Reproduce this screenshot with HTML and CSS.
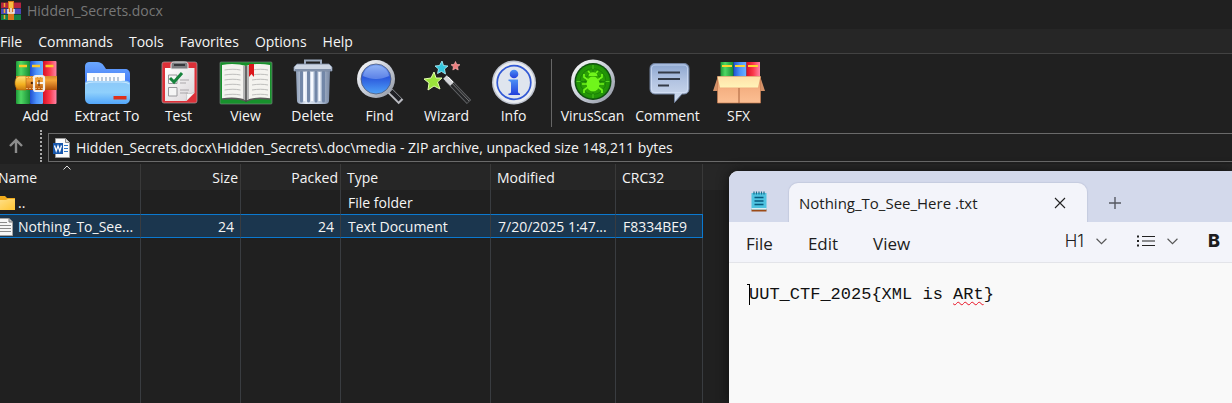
FILE: index.html
```html
<!DOCTYPE html>
<html lang="en">
<head>
<meta charset="utf-8">
<title>Hidden_Secrets.docx</title>
<link rel="stylesheet" href="styles.css">
</head>
<body>
<svg class="defs" aria-hidden="true">
  <defs>
    <linearGradient id="green"><stop offset="0" stop-color="#1f9a38"/><stop offset=".35" stop-color="#4fd863"/><stop offset="1" stop-color="#168a34"/></linearGradient>
    <linearGradient id="blue"><stop offset="0" stop-color="#1f4fd0"/><stop offset=".5" stop-color="#4c92fb"/><stop offset="1" stop-color="#6cb4ff"/></linearGradient>
    <linearGradient id="red"><stop offset="0" stop-color="#d80f26"/><stop offset=".5" stop-color="#fb3a4c"/><stop offset="1" stop-color="#ff85a8"/></linearGradient>
    <linearGradient id="belt" x2="0" y2="1"><stop offset="0" stop-color="#d98a2e"/><stop offset=".3" stop-color="#f6a63a"/><stop offset="1" stop-color="#b04f08"/></linearGradient>
    <linearGradient id="gold" x2="0" y2="1"><stop offset="0" stop-color="#ffe27a"/><stop offset=".6" stop-color="#f3b020"/><stop offset="1" stop-color="#c97a10"/></linearGradient>
    <linearGradient id="folderBack" x2="0" y2="1"><stop offset="0" stop-color="#6ba8ff"/><stop offset="1" stop-color="#2d62f2"/></linearGradient>
    <linearGradient id="folderFront" x2="0" y2="1"><stop offset="0" stop-color="#8cc8f8"/><stop offset=".5" stop-color="#8fd0fc"/><stop offset="1" stop-color="#52a6fa"/></linearGradient>
    <linearGradient id="paper" x2="1" y2="1"><stop offset="0" stop-color="#fff"/><stop offset="1" stop-color="#d9d5d8"/></linearGradient>
    <linearGradient id="steel"><stop offset="0" stop-color="#8a9bb5"/><stop offset=".3" stop-color="#e4ebf5"/><stop offset=".7" stop-color="#b8c6da"/><stop offset="1" stop-color="#7888a3"/></linearGradient>
    <linearGradient id="rim" x2="1" y2="1"><stop offset="0" stop-color="#fff"/><stop offset=".5" stop-color="#c9ced8"/><stop offset="1" stop-color="#8c929e"/></linearGradient>
    <linearGradient id="lens" x2="0" y2="1"><stop offset="0" stop-color="#7aa2f2"/><stop offset=".45" stop-color="#2b58dc"/><stop offset="1" stop-color="#4fa2f8"/></linearGradient>
    <linearGradient id="info" x2="0" y2="1"><stop offset="0" stop-color="#4b90f5"/><stop offset="1" stop-color="#2340dc"/></linearGradient>
    <linearGradient id="bubble" x2="0" y2="1"><stop offset="0" stop-color="#8ba5cf"/><stop offset=".4" stop-color="#afc1e0"/><stop offset="1" stop-color="#d3deef"/></linearGradient>
    <linearGradient id="box" x2="0" y2="1"><stop offset="0" stop-color="#d98a5c"/><stop offset=".5" stop-color="#f5b183"/><stop offset="1" stop-color="#fcbf93"/></linearGradient>
    <linearGradient id="flap" x2="0" y2="1"><stop offset="0" stop-color="#ffe0a8"/><stop offset="1" stop-color="#fff3b8"/></linearGradient>
    <radialGradient id="radar"><stop offset="0" stop-color="#3fb800"/><stop offset="1" stop-color="#1e8f08"/></radialGradient>
    <linearGradient id="yellow" x2="1" y2="1"><stop offset="0" stop-color="#ffe08a"/><stop offset="1" stop-color="#ffc533"/></linearGradient>
  </defs>
</svg>

<main class="archiver">
  <header class="titlebar">
    <svg class="app-icon" viewBox="0 0 20 19" aria-hidden="true">
      <rect y="1" width="20" height="6" fill="#b3243f"/><rect y="7" width="20" height="6" fill="#4b48b8"/><rect y="13" width="20" height="6" fill="#148044"/>
      <path d="M0 1.500h20M0 7.500h20M0 13.500h20" stroke="#171717" stroke-opacity=".5"/>
      <path d="M3.500 2v4M3.500 8v4M3.500 14v4" stroke="#f0a92e" stroke-width="1.500"/>
      <rect x="7" y="0" width="6" height="19" fill="#d8761b"/><path d="M8 1h4v6H8z" fill="#f8bd42"/>
      <path d="M7 8v4h6V8M10 7v4" stroke="#eee" stroke-width="1.500" fill="none"/>
    </svg>
    <h1>Hidden_Secrets.docx</h1>
  </header>

  <nav class="menubar" aria-label="Main menu">
    <button>File</button><button>Commands</button><button>Tools</button><button>Favorites</button><button>Options</button><button>Help</button>
  </nav>

  <div class="toolbar" role="toolbar" aria-label="Archive tools">
    <button class="tool">
      <svg viewBox="0 0 54 46" aria-hidden="true">
        <rect x="7" y="2" width="14" height="43" rx="1" fill="url(#green)"/><rect x="21" y="2" width="13" height="43" rx="1" fill="url(#blue)"/><rect x="34" y="2" width="13.500" height="43" rx="1" fill="url(#red)"/>
        <path d="M10 7h8M23 7h8M36.500 7h8" stroke="#ffc928" stroke-width="2.400"/>
        <path d="M7 17h41v14H7z" fill="url(#belt)"/>
        <path d="M11 17h6v14h-6c-3 0-5-3-5-7s2-7 5-7z" fill="url(#gold)" stroke="#b0700e" stroke-width=".6"/>
        <path d="M17 18.500h18M17 29.500h18" stroke="#ffd58a" stroke-width=".7" stroke-dasharray="2 1"/>
        <circle cx="23" cy="24" r="1.300" fill="#522300"/>
        <rect x="25" y="17" width="10" height="15" rx="2" fill="none" stroke="#f1efec" stroke-width="2.200"/>
        <path d="M28 24h6" stroke="#fff" stroke-width="1.800"/><path d="M30 21v6" stroke="#572a09"/>
      </svg>
      <span>Add</span>
    </button>
    <button class="tool tool-wide">
      <svg viewBox="0 0 54 46" aria-hidden="true">
        <path d="M5 8c0-4 2-5 5-5h7c3 0 5 1 7 4l2 3h19c3 0 5 2 5 5v20H5z" fill="url(#folderBack)"/>
        <path d="M7 14h38v16H7z" fill="#fafcff"/>
        <path d="M14 18v5M18 18v5M22 18v5M26 18v5M30 18v5M34 18v5M38 18v5" stroke="#9fb4ca" stroke-width="1.400"/>
        <path d="M5 24c2-3 5-2 8-2h28c4 0 7-1 9 2v15c0 4-2 6-6 6H11c-4 0-6-2-6-6z" fill="url(#folderFront)"/>
        <path d="M6 25c2-2 5-2 8-2h27c4 0 6 0 8 2" fill="none" stroke="#c7e7ff" stroke-width="1.200"/>
        <rect x="33.500" y="37" width="13" height="3.500" fill="#df3019"/>
      </svg>
      <span>Extract To</span>
    </button>
    <button class="tool">
      <svg viewBox="0 0 54 46" aria-hidden="true">
        <rect x="10" y="3" width="35" height="41" rx="2" fill="#dc3038" stroke="#a9a1a3" stroke-width=".7"/>
        <path d="M13 9h29.500v25l-8 8H13z" fill="url(#paper)"/><path d="M34 42c1-3 1-6 0-8 3 1 6 1 8.500-1" fill="#f8f8f8" stroke="#aaa" stroke-width=".5"/>
        <path d="M19 10V6c0-3 2-3 4-3h9c2 0 4 0 4 3v4z" fill="#7b7d80" stroke="#e9e9e9"/><path d="M22 6h11" stroke="#35383c" stroke-width="2"/>
        <path d="M16.500 16h8.500v8.500h-8.500zM16.500 28.500h8.500V37h-8.500z" fill="#f5f5f5" stroke="#99989c"/>
        <path d="M28 21h9M28 24h6M28 31h9M28 34h8" stroke="#aaa7aa"/>
        <path d="M18 19l4 4 8-9" fill="none" stroke="#16833c" stroke-width="3"/>
      </svg>
      <span>Test</span>
    </button>
    <button class="tool">
      <svg viewBox="0 0 54 46" aria-hidden="true">
        <rect x="1" y="3" width="52" height="42" rx="1" fill="#17912c" stroke="#718578" stroke-width=".7"/>
        <path d="M3 6c9-2 18-1 24 1 6-2 15-3 24-1v34c-9-1-18-1-24 2-6-3-15-3-24-2z" fill="#f4f3ef"/>
        <path d="M3 40c9-1 18-1 24 2 6-3 15-3 24-2" fill="none" stroke="#5a5a59" stroke-width="1.600"/>
        <path d="M24 6.500c2 0 3 1 3 1s1-1 3-1V40c-2 0-3 2-3 2s-1-2-3-2z" fill="#b5b5b5"/><path d="M27 7v36" stroke="#444" stroke-width="1.400"/>
        <path d="M5.500 11c6-1 11-1 16 0M5.500 16c6-1 11-1 16 0M5.500 21c6-1 11-1 16 0M5.500 26c6-1 11-1 16 0M5.500 31c6-1 11-1 16 0M5.500 36c6-1 11-1 16 0M33 11c6-1 11-1 16 0M33 16c6-1 11-1 16 0M33 21c6-1 11-1 16 0M33 26c6-1 11-1 16 0M33 31c6-1 11-1 16 0M33 36c6-1 11-1 16 0" fill="none" stroke="#bebebc"/>
        <path d="M30 5h5v13l-2.500-3-2.500 3z" fill="#dc171b"/>
      </svg>
      <span>View</span>
    </button>
    <button class="tool">
      <svg viewBox="0 0 54 46" aria-hidden="true">
        <path d="M19 6V1.500h16V6" fill="none" stroke="#9caabe" stroke-width="2"/>
        <path d="M10 12h34l-1 30c0 2-2 3-4 3H15c-2 0-4-1-4-3z" fill="url(#steel)"/>
        <path d="M15.500 13v29M22.500 13v29M30 13v29M37.500 13v29" stroke="#7287a8" stroke-width="3" stroke-linecap="round"/><path d="M18.500 13v29M26 13v29M33.500 13v29" stroke="#f7faff" stroke-width="2"/>
        <path d="M11 5h32l3 3v4H8V8z" fill="#cdd6e4" stroke="#79899f" stroke-width=".8"/><path d="M9 11h36" stroke="#8191aa" stroke-width="2"/>
      </svg>
      <span>Delete</span>
    </button>
    <button class="tool">
      <svg viewBox="0 0 54 46" aria-hidden="true">
        <path d="M37 32l11 11" stroke="#b9bac0" stroke-width="6.500"/><path d="M38 32l9 9" stroke="#202126" stroke-width="4"/><path d="M39 36l5 5" stroke="#85878d"/>
        <circle cx="23" cy="20" r="19" fill="url(#rim)"/><circle cx="23" cy="20" r="15" fill="url(#lens)" stroke="#4e5b79" stroke-width=".8"/>
        <path d="M10 17c2-14 24-14 26 0-8 4-18 4-26 0z" fill="#c7dcff" opacity=".35"/>
      </svg>
      <span>Find</span>
    </button>
    <button class="tool">
      <svg viewBox="0 0 54 46" aria-hidden="true">
        <path d="M27 20l22 23" stroke="#66686b" stroke-width="6"/><path d="M27 20l21.500 22.500" stroke="#252628" stroke-width="4"/><path d="M27 19l22 23" stroke="#777"/>
        <path d="M25 18l7 7" stroke="#d5d6d9" stroke-width="5"/><path d="M28 18l5 5" stroke="#fff"/>
        <path d="M14 13l2 6 6 0-4.500 4 2.500 7-6-3-6 4 1-7-5-4 7-1z" fill="#9be53b" stroke="#e3ffad"/>
        <path d="M22 2l1.500 4.500 4.500.5-3.500 3 1 5-4-2.500-4 2 1-4.500L15 7l4.500-.5z" fill="#35c8df" stroke="#b3f4ff" stroke-width=".8"/>
        <path d="M35.500 2.500l1.200 2.800 3.300.4-2.400 2.100.6 3.200-2.700-1.500-2.700 1.500.6-3.200L31 5.700l3.300-.4z" fill="#ef8080" stroke="#ffb5b5" stroke-width=".6"/>
      </svg>
      <span>Wizard</span>
    </button>
    <button class="tool">
      <svg viewBox="0 0 54 46" aria-hidden="true">
        <circle cx="27" cy="23.500" r="22" fill="#bfc4cf"/><circle cx="27" cy="23.500" r="20.500" fill="#e9ecf1"/>
        <circle cx="27" cy="23.500" r="16.800" fill="#dfe5ee" stroke="#3158d4" stroke-width="1.700"/>
        <circle cx="27" cy="15" r="4.300" fill="url(#info)"/><path d="M21.500 20.500H31v12c0 1.500 1 2 2 2v1.500H21.500v-1.500c2 0 2.500-.5 2.500-2V25c0-2-.5-3-2.500-3z" fill="url(#info)"/>
      </svg>
      <span>Info</span>
    </button>
    <span class="toolbar-divider"></span>
    <button class="tool tool-wide">
      <svg viewBox="0 0 54 46" aria-hidden="true">
        <circle cx="27" cy="22.500" r="22" fill="url(#rim)"/><circle cx="27" cy="22.500" r="18.500" fill="#0e4f0d"/><circle cx="27" cy="22.500" r="17" fill="url(#radar)"/>
        <g fill="none" stroke="#167b08" stroke-width=".8"><circle cx="27" cy="22.500" r="13"/><circle cx="27" cy="22.500" r="8"/><path d="M10 22.500h34M27 6v33"/></g>
        <path d="M27 6v4M27 35v4M10.500 22.500h4M39.500 22.500h4" stroke="#55cf22"/>
        <g fill="none" stroke="#70f51b" stroke-width="1.700"><path d="M22 21l-4-3v-3M32 21l4-3v-3M21 25h-5M33 25h5M22 28l-4 3v3M32 28l4 3v3M24 14l-2-2M30 14l2-2"/></g>
        <path d="M22.500 17c0-5 9-5 9 0z" fill="#70f51b"/><ellipse cx="27" cy="25" rx="6.500" ry="7.500" fill="#70f51b"/>
      </svg>
      <span>VirusScan</span>
    </button>
    <button class="tool tool-wide">
      <svg viewBox="0 0 54 46" aria-hidden="true">
        <path d="M14 4.500h29c3 0 5 2 5 5V30c0 3-2 5-5 5h-2l-7.500 8.500V35H14c-3 0-5-2-5-5V9.500c0-3 2-5 5-5z" fill="url(#bubble)" stroke="#73839f"/>
        <path d="M14 6h29c2 0 3.500 1.500 3.500 3.500V30c0 2-1.500 3.500-3.500 3.500H14c-2 0-3.500-1.500-3.500-3.500V9.500C10.500 7.500 12 6 14 6z" fill="none" stroke="#dce8fb" stroke-opacity=".6"/>
        <path d="M17 13.500h22M17 20h22M17 26.500h11" stroke="#343b47" stroke-width="2"/>
      </svg>
      <span>Comment</span>
    </button>
    <button class="tool">
      <svg viewBox="0 0 54 46" aria-hidden="true">
        <rect x="8.500" y="3" width="13" height="20" fill="url(#green)"/><rect x="21.500" y="3" width="13" height="20" fill="url(#blue)"/><rect x="34.500" y="3" width="13.500" height="20" fill="url(#red)"/>
        <path d="M10 7h10M23 7h10M36 7h10" stroke="#ffd52c" stroke-width="2"/>
        <path d="M6 17L1 32h5zM48 17l5 15h-5z" fill="#d49269"/><path d="M5.500 17.500h43V44h-43z" fill="url(#box)" stroke="#c47b50" stroke-width=".7"/>
        <path d="M5.500 17.500h43L46 28.500H8z" fill="url(#flap)"/><path d="M27 29v15" stroke="#a9633c"/>
      </svg>
      <span>SFX</span>
    </button>
  </div>

  <div class="addressbar">
    <button class="up" aria-label="Up one level">
      <svg viewBox="0 0 16 16" aria-hidden="true"><path d="M8 15V2M2 8l6-6 6 6" fill="none" stroke="#8c8c8c" stroke-width="2.400"/></svg>
    </button>
    <span class="grip"></span>
    <label class="address">
      <svg viewBox="0 0 20 22" aria-hidden="true">
        <path d="M3.500 1.500h10l4 4v15h-14z" fill="#fafafa" stroke="#9b9b9b"/><path d="M13.500 1.500v4h4" fill="#ddd" stroke="#888"/>
        <path d="M12 8.500h4M12 11.500h4M12 14.500h4" stroke="#2c75c7" stroke-width="1.200"/><rect x="1" y="6" width="10" height="11" fill="#1857ab"/>
        <path d="M2.500 8.500l1.700 5.500L6 9l1.800 5 1.700-5.500" fill="none" stroke="#fff" stroke-width="1.300"/>
      </svg>
      <input type="text" aria-label="Path" value="Hidden_Secrets.docx\Hidden_Secrets\.doc\media - ZIP archive, unpacked size 148,211 bytes">
    </label>
  </div>

  <div class="files">
    <table>
      <colgroup><col class="c-name"><col class="c-size"><col class="c-size"><col class="c-type"><col class="c-date"><col class="c-crc"></colgroup>
      <thead>
        <tr>
          <th class="sorted">Name<svg class="sort" viewBox="0 0 8 5" aria-hidden="true"><path d="M.5 4.500L4 1l3.500 3.500" fill="none" stroke="#ddd"/></svg></th>
          <th class="num">Size</th><th class="num">Packed</th><th>Type</th><th>Modified</th><th>CRC32</th>
        </tr>
      </thead>
      <tbody>
        <tr>
          <td><span class="file"><svg viewBox="0 0 18 18" aria-hidden="true"><path d="M-2 2H5l2 2h8v12H-2z" fill="#f0ab1c"/><path d="M-2 6H6l2-1h7v11H-2z" fill="url(#yellow)"/></svg>..</span></td>
          <td></td><td></td><td>File folder</td><td></td><td></td>
        </tr>
        <tr class="selected">
          <td><span class="file"><svg viewBox="0 0 18 18" aria-hidden="true"><path d="M-2 .5H9l3.500 3.500v13.500H-2z" fill="#f7f7f7" stroke="#a2a2a2"/><path d="M9 .5V4h3.500" fill="#ccc" stroke="#777"/><path d="M0 4.500h7M0 7.500h11M0 10.500h11M0 13.500h11" stroke="#8b8b8b"/></svg>Nothing_To_See...</span></td>
          <td class="num">24</td><td class="num">24</td><td>Text Document</td><td>7/20/2025 1:47...</td><td>F8334BE9</td>
        </tr>
        <tr class="rest"><td></td><td></td><td></td><td></td><td></td><td></td></tr>
      </tbody>
    </table>
  </div>
</main>

<section class="notepad" aria-label="Notepad">
  <div class="tabs">
    <svg class="note-icon" viewBox="0 0 16 21" aria-hidden="true">
      <path d="M.5 18h15v2.500H.5z" fill="#9c4b17"/><path d="M.5 2h15v16.500H.5z" fill="#4fc3e0"/><path d="M.5 17h15v1.500H.5z" fill="#d8eef4"/>
      <path d="M3 .5v3M5.500.5v3M8 .5v3M10.500.5v3M13 .5v3" stroke="#176d8c" stroke-width="1.200"/><path d="M3.500 6.500h9M3.500 10h9M3.500 13.500h9" stroke="#075a7d" stroke-width="1.600"/>
    </svg>
    <div class="tab">
      <span>Nothing_To_See_Here .txt</span>
      <button aria-label="Close tab"><svg viewBox="0 0 12 12" aria-hidden="true"><path d="M1 1l10 10M11 1L1 11" stroke="#222" stroke-width="1.100"/></svg></button>
    </div>
    <button class="new-tab" aria-label="New tab"><svg viewBox="0 0 12 12" aria-hidden="true"><path d="M6 0v12M0 6h12" stroke="#555861" stroke-width="1.400"/></svg></button>
  </div>
  <div class="note-menu">
    <button>File</button><button>Edit</button><button>View</button>
    <div class="format">
      <button class="heading">H1<svg class="chevron" viewBox="0 0 10 6" aria-hidden="true"><path d="M.5.5L5 5 9.500.5" fill="none" stroke="#555"/></svg></button>
      <button class="list" aria-label="List"><svg class="bullets" viewBox="0 0 18 12" aria-hidden="true"><path d="M5 1.500h13M5 6h13M5 10.500h13" stroke="#222" stroke-width="1.200"/><path d="M0 1.500h2M0 6h2M0 10.500h2" stroke="#222" stroke-width="2"/></svg><svg class="chevron" viewBox="0 0 10 6" aria-hidden="true"><path d="M.5.5L5 5 9.500.5" fill="none" stroke="#555"/></svg></button>
      <button class="bold" aria-label="Bold">B</button>
    </div>
  </div>
  <div class="editor" role="textbox" aria-label="Text editor" aria-multiline="true" contenteditable="true" spellcheck="false"><span class="caret"></span>UUT_CTF_2025{XML is <span class="typo">ARt</span>}</div>
</section>
</body>
</html>
```
FILE: styles.css
```css
* { box-sizing: border-box; }

body {
  margin: 0;
  min-height: 100vh;
  background: #202020;
  color: #f5f5f5;
  font: 14px/20px "Open Sans", "Noto Sans", sans-serif;
  overflow: hidden;
}

button, input {
  margin: 0;
  padding: 0;
  border: 0;
  background: none;
  color: inherit;
  font: inherit;
}

svg { display: block; flex: none; }
.defs { position: absolute; width: 0; height: 0; }

/* Archive manager */
.archiver {
  display: flex;
  flex-direction: column;
  min-height: 100vh;
}

.titlebar {
  display: flex;
  align-items: center;
  gap: 6px;
  height: 29px;
  padding: 0 1px 8px;
}
.titlebar h1 { margin: 0; font-size: 14px; line-height: 20px; font-weight: 400; color: #777; }
.app-icon { width: 20px; height: 19px; }

.menubar {
  display: flex;
  gap: 16px;
  height: 25px;
  padding-top: 2px;
  background: #262626;
  border-bottom: 1px solid #424242;
}

.toolbar {
  display: flex;
  height: 76px;
  padding: 5px 2px 0;
}
.tool {
  display: flex;
  flex-direction: column;
  align-items: center;
  gap: 1px;
  width: 67px;
}
.tool-wide { width: 76px; }
.tool svg { width: 54px; height: 46px; }
.toolbar-divider { width: 1px; height: 68px; margin: 0 3px 0 4px; background: #666; }
.toolbar-divider ~ .tool-wide { width: 75px; }

.addressbar { display: flex; height: 34px; padding-bottom: 2px; }
.up { display: flex; align-items: center; padding: 0 16px 0 8px; }
.up svg { width: 16px; height: 16px; }
.grip { border-left: 2px dotted #aaa; margin-right: 6px; }
.address {
  display: flex;
  flex: 1;
  align-items: center;
  gap: 4px;
  margin: 3px 0 0;
  padding-left: 3px;
  border: 1px solid #6a6a6a;
  border-right: 0;
}
.address svg { width: 20px; height: 22px; }
.address input { flex: 1; min-width: 0; outline: 0; }

.files {
  display: grid;
  flex: 1;
  justify-content: start;
  background: linear-gradient(#262626 26px, transparent 26px);
}
table { width: 703px; border-spacing: 0; table-layout: fixed; }
.c-name { width: 141px; }
.c-size { width: 100px; }
.c-type { width: 150px; }
.c-date { width: 125px; }
.c-crc { width: 87px; }
th, td { padding: 1px 4px 0 7px; text-align: left; white-space: nowrap; }
th { position: relative; height: 26px; padding-top: 2px; padding-left: 6px; border-right: 1px solid #393939; font-weight: 400; }
th:first-child { padding-left: 0; text-indent: -2px; }
td { height: 24px; border-right: 1px solid #393c40; }
td:first-child { padding-left: 0; }
th.num { padding-right: 2px; text-align: right; }
td.num { padding-right: 6px; text-align: right; }
.sort { position: absolute; left: 63px; top: 1px; width: 8px; height: 5px; }
.file { display: flex; align-items: center; }
.file svg { width: 18px; height: 18px; }
.selected td {
  background: #1b364e;
  border-top: 1px solid #0b79d0;
  border-bottom: 1px solid #0b79d0;
}
.selected td:last-child { border-right-color: #0b79d0; }
.rest td { height: auto; }

/* Notepad window, floating over the archive manager */
.notepad {
  position: absolute;
  top: 171px;
  right: 0;
  bottom: 0;
  left: 729px;
  display: flex;
  flex-direction: column;
  overflow: hidden;
  border-radius: 9px 0 0 0;
  background: #f9f9f9;
  color: #1d1d20;
  box-shadow: 0 0 12px #111;
}
.tabs { display: flex; height: 51px; background: #d3d9eb; }
.note-icon { width: 16px; height: 21px; margin: 20px 22px 0; }
.tab {
  display: flex;
  flex: none;
  align-items: center;
  justify-content: space-between;
  width: 298px;
  height: 39px;
  margin-top: 12px;
  padding: 0 21px 0 10px;
  border-radius: 9px 9px 0 0;
  background: #f3f4fa;
  box-shadow: 0 0 1px 1px #c5cbdf;
  font-size: 15px;
}
.tab svg, .new-tab svg { width: 12px; height: 12px; }
.new-tab { height: 38px; margin: 13px 0 0 22px; }

.note-menu {
  position: relative;
  display: flex;
  align-items: center;
  gap: 35px;
  flex: none;
  height: 41px;
  padding: 3px 12px 0 17px;
  border-bottom: 1px solid #e3e4e9;
  background: #f3f4fa;
  font-size: 17px;
}
.format { display: flex; gap: 30px; margin-left: auto; padding-bottom: 5px; }
.format button { display: flex; align-items: center; }
.heading { gap: 12px; }
.format .heading { font-family: Inter, sans-serif; font-weight: 300; }
.list { gap: 12px; }
.bullets { width: 18px; height: 12px; }
.chevron { width: 11px; height: 7px; }
.format .bold { font: 800 18px/20px Inter, sans-serif; }

.editor {
  position: relative;
  flex: 1;
  padding: 21px 20px;
  outline: 0;
  color: #111;
  font: 17px/22px "Liberation Mono", monospace;
  white-space: pre;
}
.caret { position: absolute; left: 20px; top: 21px; width: 1px; height: 21px; background: #000; }
.caret::before { content: ""; position: absolute; left: -2px; top: 0; width: 2px; height: 1px; background: #000; }
.typo { text-decoration: underline wavy #e81123 1px; text-underline-offset: 2px; }
```
